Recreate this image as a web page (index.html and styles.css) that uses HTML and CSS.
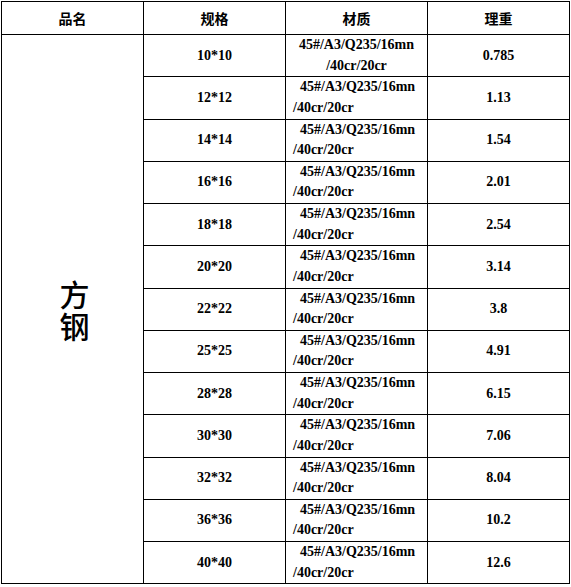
FILE: index.html
```html
<!DOCTYPE html>
<html lang="zh">
<head>
<meta charset="utf-8">
<title>方钢</title>
<link rel="stylesheet" href="styles.css">
</head>
<body>
<div class="wrap">
<table class="spec">
  <colgroup><col class="c"><col class="c"><col class="c"><col class="c"></colgroup>
  <thead>
    <tr class="head"><th>品名</th><th>规格</th><th>材质</th><th>理重</th></tr>
  </thead>
  <tbody>
    <tr class="row"><td class="name" rowspan="13"><div class="ch">方钢</div></td><td class="num">10*10</td><td class="mat center">45#/A3/Q235/16mn<br>/40cr/20cr</td><td class="num">0.785</td></tr>
    <tr class="row"><td class="num">12*12</td><td class="mat">&nbsp;&nbsp;45#/A3/Q235/16mn<br>/40cr/20cr</td><td class="num">1.13</td></tr>
    <tr class="row"><td class="num">14*14</td><td class="mat">&nbsp;&nbsp;45#/A3/Q235/16mn<br>/40cr/20cr</td><td class="num">1.54</td></tr>
    <tr class="row"><td class="num">16*16</td><td class="mat">&nbsp;&nbsp;45#/A3/Q235/16mn<br>/40cr/20cr</td><td class="num">2.01</td></tr>
    <tr class="row"><td class="num">18*18</td><td class="mat">&nbsp;&nbsp;45#/A3/Q235/16mn<br>/40cr/20cr</td><td class="num">2.54</td></tr>
    <tr class="row"><td class="num">20*20</td><td class="mat">&nbsp;&nbsp;45#/A3/Q235/16mn<br>/40cr/20cr</td><td class="num">3.14</td></tr>
    <tr class="row"><td class="num">22*22</td><td class="mat">&nbsp;&nbsp;45#/A3/Q235/16mn<br>/40cr/20cr</td><td class="num">3.8</td></tr>
    <tr class="row"><td class="num">25*25</td><td class="mat">&nbsp;&nbsp;45#/A3/Q235/16mn<br>/40cr/20cr</td><td class="num">4.91</td></tr>
    <tr class="row"><td class="num">28*28</td><td class="mat">&nbsp;&nbsp;45#/A3/Q235/16mn<br>/40cr/20cr</td><td class="num">6.15</td></tr>
    <tr class="row"><td class="num">30*30</td><td class="mat">&nbsp;&nbsp;45#/A3/Q235/16mn<br>/40cr/20cr</td><td class="num">7.06</td></tr>
    <tr class="row"><td class="num">32*32</td><td class="mat">&nbsp;&nbsp;45#/A3/Q235/16mn<br>/40cr/20cr</td><td class="num">8.04</td></tr>
    <tr class="row"><td class="num">36*36</td><td class="mat">&nbsp;&nbsp;45#/A3/Q235/16mn<br>/40cr/20cr</td><td class="num">10.2</td></tr>
    <tr class="row"><td class="num">40*40</td><td class="mat">&nbsp;&nbsp;45#/A3/Q235/16mn<br>/40cr/20cr</td><td class="num">12.6</td></tr>
  </tbody>
</table>
</div>
</body>
</html>
```
FILE: styles.css
```css
html, body {
  margin: 0;
  padding: 0;
  background: #fff;
}
.wrap {
  padding: 1px 0 0 1px;
}
.spec {
  border-collapse: collapse;
  table-layout: fixed;
  width: 569px;
  color: #000;
}
.c {
  width: 142px;
}
.spec th,
.spec td {
  border: 1px solid #000;
  padding: 0;
  vertical-align: middle;
}
.head {
  height: 33px;
}
.head th {
  font-family: "Noto Sans CJK SC", "Noto Sans", sans-serif;
  font-weight: 700;
  font-size: 14px;
  line-height: 20px;
  text-align: center;
}
.row {
  height: 42.25px;
}
.spec td.name {
  font-family: "Noto Sans CJK SC", "Noto Sans", sans-serif;
  font-size: 30px;
  font-weight: 500;
  text-align: center;
  padding-left: 4px;
}
.ch {
  width: 30px;
  margin: 0 auto;
  line-height: 32px;
  word-break: break-all;
}
.num {
  font-family: "Liberation Serif", "Times New Roman", serif;
  font-weight: 700;
  font-size: 14px;
  line-height: 20px;
  text-align: center;
}
.spec td.mat {
  font-family: "Liberation Serif", "Times New Roman", serif;
  font-weight: 700;
  font-size: 14px;
  line-height: 20.5px;
  text-align: left;
  padding-left: 7px;
  white-space: nowrap;
}
.spec td.mat.center {
  text-align: center;
  padding-left: 0;
}
```
